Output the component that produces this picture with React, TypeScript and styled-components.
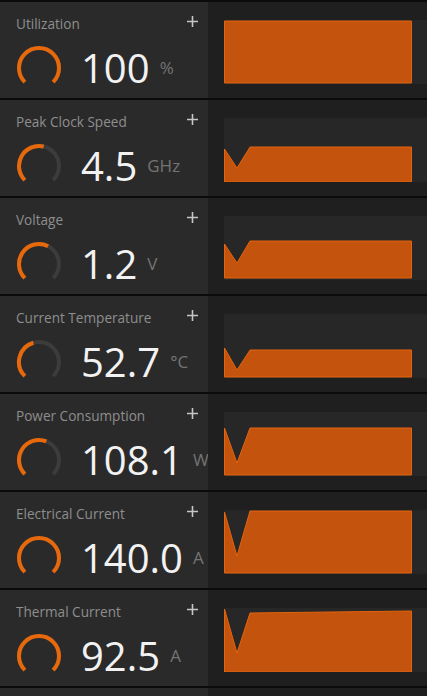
import React from 'react';
import styled, { createGlobalStyle } from 'styled-components';

interface Metric {
    title: string;
    value: string;
    unit: string;
    gauge: number; // 0..1 of the 270deg arc
    line: [number, number, number, number]; // left, dip, rise, right (y within chart)
    bottom: number;
}

const metrics: Metric[] = [
    { title: 'Utilization', value: '100', unit: '%', gauge: 1, line: [1, 1, 1, 1], bottom: 63 },
    { title: 'Peak Clock Speed', value: '4.5', unit: 'GHz', gauge: 0.55, line: [31, 50, 29, 29], bottom: 64 },
    { title: 'Voltage', value: '1.2', unit: 'V', gauge: 0.6, line: [28, 47, 25, 25], bottom: 62 },
    { title: 'Current Temperature', value: '52.7', unit: '°C', gauge: 0.44, line: [34, 56, 36, 36], bottom: 63 },
    { title: 'Power Consumption', value: '108.1', unit: 'W', gauge: 0.58, line: [16, 51, 16, 16], bottom: 63 },
    { title: 'Electrical Current', value: '140.0', unit: 'A', gauge: 1, line: [2, 46, 1, 1], bottom: 63 },
    { title: 'Thermal Current', value: '92.5', unit: 'A', gauge: 1, line: [1, 45, 5, 3], bottom: 64 },
];

const GlobalStyle = createGlobalStyle`
  html, body {
    margin: 0;
    padding: 0;
    background: #0b0b0b;
    overflow: hidden;
  }
  body {
    font-family: "Open Sans", "Noto Sans", sans-serif;
  }
`;

const Page = styled.div`
  width: 427px;
  height: 696px;
  padding-top: 2px;
  box-sizing: border-box;
  background: #0b0b0b;
  overflow: hidden;
`;

const Row = styled.div`
  display: grid;
  grid-template-columns: 208px 1fr;
  height: 96px;
  border-bottom: 2px solid #0b0b0b;
`;

const Info = styled.div`
  background: #2a2a2a;
  padding: 14px 10px 0 16px;
  display: flex;
  flex-direction: column;
`;

const Header = styled.div`
  display: flex;
  justify-content: space-between;
  align-items: flex-start;
`;

const Title = styled.div`
  font-size: 13.6px;
  line-height: 16px;
  color: #8e8e8e;
`;

const Reading = styled.div`
  display: flex;
  align-items: center;
  height: 44px;
  margin-top: 14px;
`;

const Value = styled.span`
  font-size: 40px;
  line-height: 44px;
  color: #f2f2f2;
  margin-left: 19px;
`;

const Unit = styled.span`
  font-size: 17px;
  line-height: 20px;
  color: #747474;
  margin-left: 10px;
`;

const Graph = styled.div`
  background: #1f1f1f;
  padding: 18px 0 0 16px;
`;

const ChartBox = styled.div`
  height: 64px;
  background: #272727;
`;

const Plus = () => (
    <svg width="11" height="11" viewBox="0 0 11 11">
        <path d="M5.5 0V11M0 5.5H11" stroke="#c6c6c6" strokeWidth="1.6" />
    </svg>
);

const polar = (cx: number, cy: number, r: number, deg: number) => {
    const a = (deg * Math.PI) / 180;
    return [cx + r * Math.cos(a), cy + r * Math.sin(a)];
};

const arc = (from: number, to: number) => {
    const [x1, y1] = polar(23, 23, 20, from);
    const [x2, y2] = polar(23, 23, 20, to);
    const large = to - from > 180 ? 1 : 0;
    return `M${x1.toFixed(2)} ${y1.toFixed(2)} A20 20 0 ${large} 1 ${x2.toFixed(2)} ${y2.toFixed(2)}`;
};

const Gauge: React.FC<{ level: number }> = ({ level }) => {
    const end = 135 + 270 * level;
    return (
        <svg width="46" height="46" viewBox="0 0 46 46" style={{ flexShrink: 0 }}>
            <path d={arc(135, 405)} fill="none" stroke="#3c3c3c" strokeWidth="4" />
            <path d={arc(135, end)} fill="none" stroke="#e8690c" strokeWidth="4" />
        </svg>
    );
};

const Chart: React.FC<{ line: Metric['line']; bottom: number }> = ({ line, bottom }) => {
    const [l, d, r, e] = line;
    const pts = `0.5,${l} 13,${d} 26,${r} 187.5,${e} 187.5,${bottom} 0.5,${bottom}`;
    return (
        <svg width="188" height="64" viewBox="0 0 188 64">
            <polygon points={pts} fill="#c4530e" stroke="#e3640f" strokeWidth="1" strokeLinejoin="miter" />
        </svg>
    );
};

const App: React.FC = () => (
    <Page>
        <GlobalStyle />
        {metrics.map((m) => (
            <Row key={m.title}>
                <Info>
                    <Header>
                        <Title>{m.title}</Title>
                        <Plus />
                    </Header>
                    <Reading>
                        <Gauge level={m.gauge} />
                        <Value>{m.value}</Value>
                        <Unit>{m.unit}</Unit>
                    </Reading>
                </Info>
                <Graph>
                    <ChartBox>
                        <Chart line={m.line} bottom={m.bottom} />
                    </ChartBox>
                </Graph>
            </Row>
        ))}
        <Row>
            <Info />
            <Graph />
        </Row>
    </Page>
);

export default App;
